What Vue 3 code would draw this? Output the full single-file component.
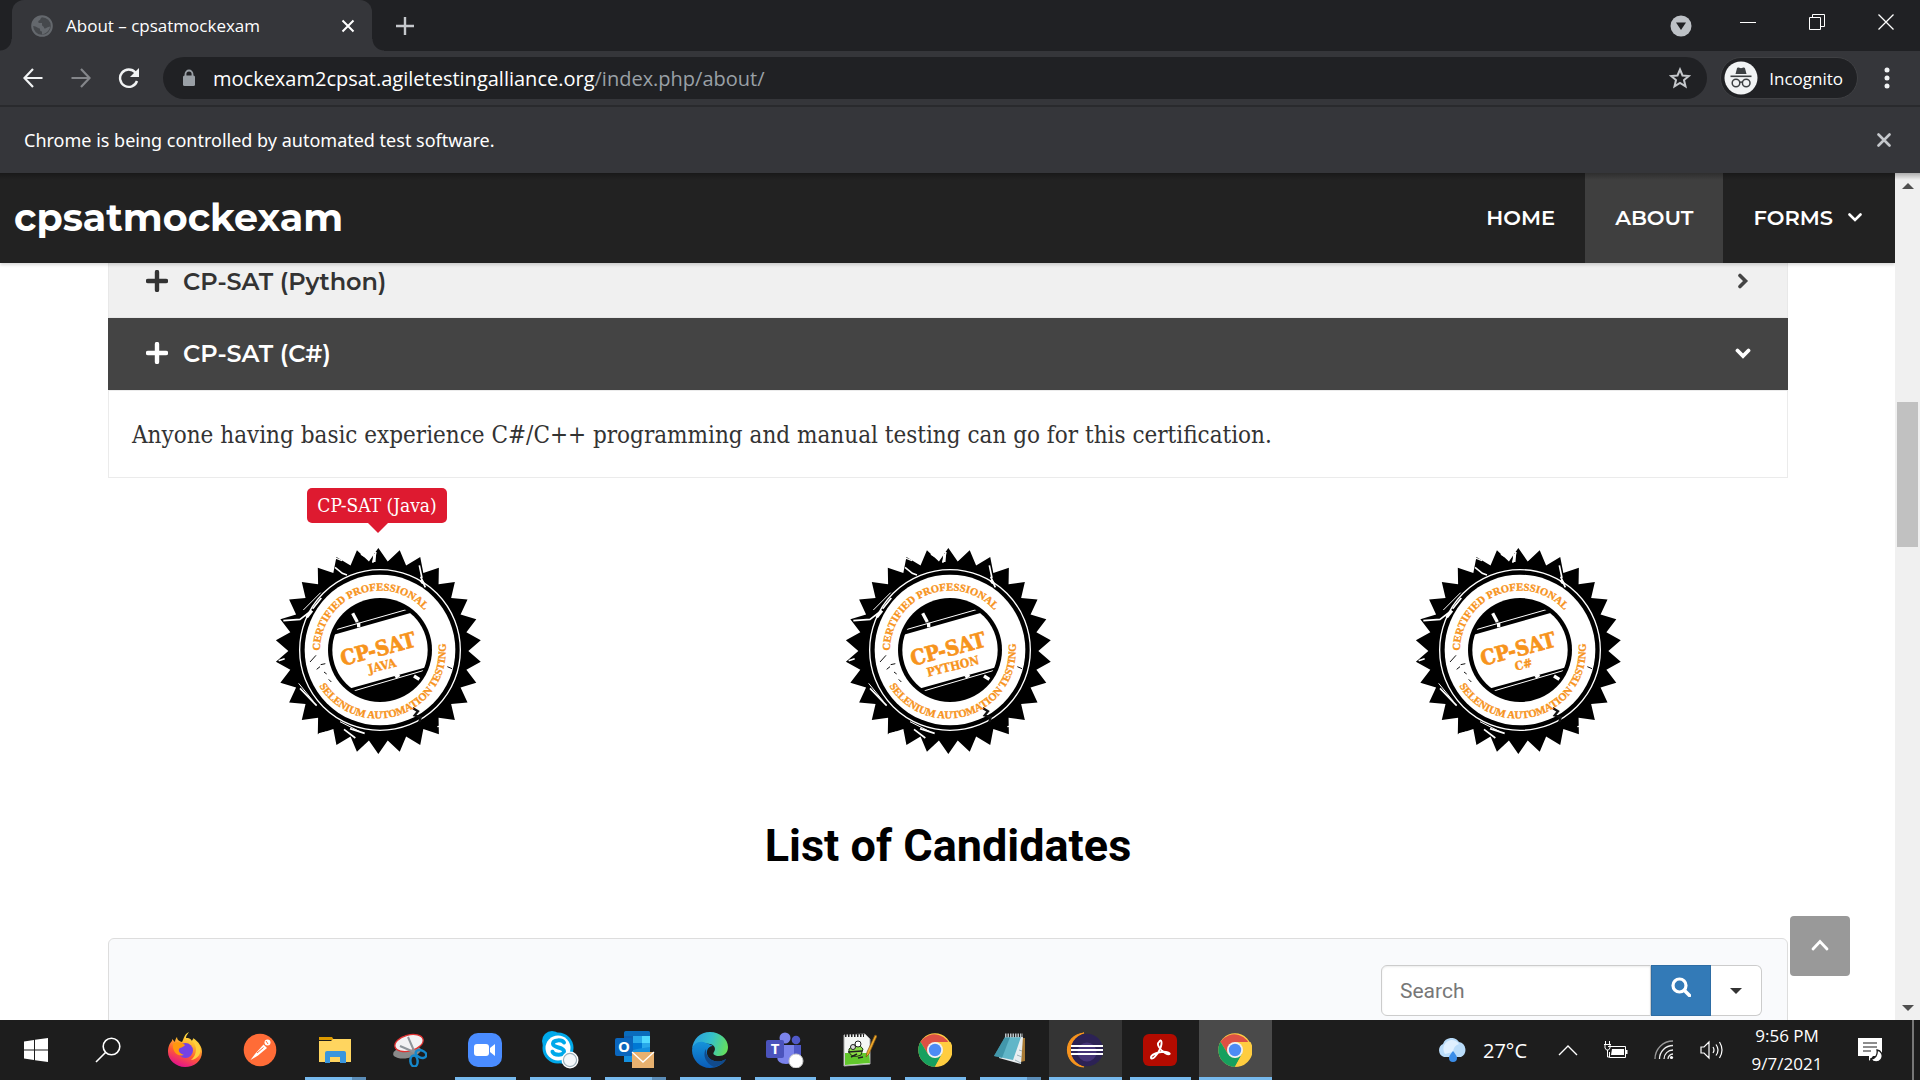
<script setup>
import { ref } from 'vue'

const query = ref('')

const badges = [
  { name: 'JAVA', tip: 'CP-SAT (Java)', x: 328, y: 430 },
  { name: 'PYTHON', x: 294, y: 440 },
  { name: 'C#', x: 348, y: 422 }
]

const round = (n) => Math.round(n * 10) / 10
const burst = Array.from({ length: 60 }, (_, i) => {
  const r = i % 2 ? 270 : 309
  const a = (i * 6 * Math.PI) / 180
  return `${round(355 + r * Math.sin(a))},${round(363 - r * Math.cos(a))}`
}).join(' ')

const apps = [
  { id: 'firefox', label: 'Firefox' },
  { id: 'postman', label: 'Postman' },
  { id: 'explorer', label: 'File Explorer', running: true, stacked: true },
  { id: 'snip', label: 'Snipping Tool' },
  { id: 'zoom', label: 'Zoom', running: true },
  { id: 'skype', label: 'Skype', running: true },
  { id: 'outlook', label: 'Outlook', running: true, stacked: true },
  { id: 'edge', label: 'Edge', running: true },
  { id: 'teams', label: 'Teams', running: true },
  { id: 'npp', label: 'Notepad++', running: true },
  { id: 'chrome', label: 'Chrome', running: true },
  { id: 'notepad', label: 'Notepad', running: true, stacked: true },
  { id: 'eclipse', label: 'Eclipse', running: true, lit: true },
  { id: 'acrobat', label: 'Acrobat', running: true },
  { id: 'chrome', label: 'Chrome test window', running: true, active: true }
]
</script>

<template>
  <div class="desktop">
    <div class="tabstrip">
      <div class="tab">
        <svg class="favicon" viewBox="0 0 22 22" width="22" height="22">
          <circle cx="11" cy="11" r="9.800" fill="#45484c" stroke="#64686d" stroke-width="2" />
          <path d="M11 2c-2 1-1 3-3 3.500c-1 .5-1 2 0 2.500h3v2c0 1.500 2 1 2 2.500s2 1 3 0l3-1c0 3-3 7-8 8v-3c-2 0-2-1-2-3c-2 0-3-2-7-2.500C1 6 6 1 11 2Z" fill="#64686d" />
        </svg>
        <span class="tab-title">About – cpsatmockexam</span>
        <button class="plain tab-close" aria-label="Close tab">
          <svg viewBox="0 0 14 14" width="14" height="14"><path d="M1.500 1.500 12.500 12.500M12.500 1.500 1.500 12.500" stroke="#fff" stroke-width="2" fill="none" /></svg>
        </button>
      </div>
      <button class="plain new-tab" aria-label="New tab">
        <svg viewBox="0 0 18 18" width="18" height="18"><path d="M9 0v18M0 9h18" stroke="#c5c8cc" stroke-width="2.400" /></svg>
      </button>
      <div class="window-controls">
        <button class="plain search-tabs" aria-label="Search tabs">
          <svg viewBox="0 0 22 22" width="22" height="22"><circle cx="11" cy="11" r="10.500" fill="#bdc1c6" /><path d="M6 7.500h10l-5 7.500z" fill="#202124" /></svg>
        </button>
        <button class="plain" aria-label="Minimize"><svg viewBox="0 0 16 16" width="16" height="16"><path d="M0 8.500h16" stroke="#fff" /></svg></button>
        <button class="plain" aria-label="Restore"><svg viewBox="0 0 16 16" width="16" height="16"><path d="M.5 3.500h11v12H.5zM3.500 3.500v-3h12v12h-4" fill="none" stroke="#fff" /></svg></button>
        <button class="plain" aria-label="Close window"><svg viewBox="0 0 16 16" width="16" height="16"><path d="M.5.500l15 15M15.500.500l-15 15" stroke="#fff" stroke-width="1.300" /></svg></button>
      </div>
    </div>

    <div class="toolbar">
      <button class="plain nav-btn" aria-label="Back"><svg viewBox="0 0 20 20" width="20" height="20"><path d="M19.500 10H2M10 1 1.500 10l8.500 9" fill="none" stroke="#f1f3f4" stroke-width="2.200" /></svg></button>
      <button class="plain nav-btn" aria-label="Forward"><svg viewBox="0 0 20 20" width="20" height="20"><path d="M.5 10H18M10 1l8.500 9-8.500 9" fill="none" stroke="#84868a" stroke-width="2.200" /></svg></button>
      <button class="plain nav-btn" aria-label="Reload"><svg viewBox="0 0 22 22" width="22" height="22"><path d="M19 14a8.700 8.700 0 1 1-1.600-8.500" fill="none" stroke="#f1f3f4" stroke-width="2.400" /><path d="M21 1v9h-9z" fill="#f1f3f4" /></svg></button>
      <div class="omnibox">
        <svg viewBox="0 0 14 18" width="14" height="18"><path d="M3.500 7V5a3.500 3.500 0 0 1 7 0v2" fill="none" stroke="#9aa0a6" stroke-width="1.800" /><rect x="1" y="6.500" width="12" height="10.500" rx="1.500" fill="#9aa0a6" /></svg>
        <span class="url">mockexam2cpsat.agiletestingalliance.org<span class="path">/index.php/about/</span></span>
        <button class="plain star" aria-label="Bookmark this page"><svg viewBox="0 0 22 22" width="22" height="22"><path d="m11 2.500 2.500 6 6.300.5-4.800 4.100 1.500 6.300-5.500-3.400-5.500 3.400L7 13.100 2.200 9l6.300-.5z" fill="none" stroke="#c5c8cc" stroke-width="2" /></svg></button>
      </div>
      <div class="incognito">
        <svg viewBox="0 0 34 34" width="34" height="34">
          <circle cx="17" cy="17" r="16.500" fill="#f1f3f4" />
          <path d="M11.500 13 13 7.300c.3-1 1-1 1.500-.8l2.500.8 2.500-.8c.6-.2 1.200-.1 1.500.8l1.500 5.700z" fill="#3c4043" />
          <path d="M6.500 15.300h21" stroke="#3c4043" stroke-width="1.600" />
          <g fill="none" stroke="#3c4043" stroke-width="1.500"><circle cx="12" cy="22" r="3.800" /><circle cx="22.200" cy="22" r="3.800" /><path d="M15.800 21.500q1.300-1 2.600 0" /></g>
        </svg>
        <span>Incognito</span>
      </div>
      <button class="plain menu" aria-label="Menu"><svg viewBox="0 0 6 22" width="6" height="22" fill="#f1f3f4"><circle cx="3" cy="3" r="2.500" /><circle cx="3" cy="11" r="2.500" /><circle cx="3" cy="19" r="2.500" /></svg></button>
    </div>

    <div class="infobar">
      <span>Chrome is being controlled by automated test software.</span>
      <button class="plain" aria-label="Dismiss"><svg viewBox="0 0 14 14" width="14" height="14"><path d="M1.500 1.500l11 11M12.500 1.500l-11 11" stroke="#c5c8cc" stroke-width="2.600" stroke-linecap="round" /></svg></button>
    </div>

    <div class="viewport">
      <div class="page">
        <header class="site-header">
          <a class="brand" href="#">cpsatmockexam</a>
          <nav>
            <a href="#home">HOME</a>
            <a href="#about" class="current">ABOUT</a>
            <a href="#forms">FORMS<svg viewBox="0 0 14 9" width="14" height="9"><path d="m1.500 1.500 5.500 5.500 5.500-5.500" fill="none" stroke="#fff" stroke-width="2.600" stroke-linecap="round" /></svg></a>
          </nav>
        </header>

        <main>
          <section class="accordion">
            <button class="fold">
              <svg viewBox="0 0 22 22" width="22" height="22"><path d="M11 2v18M2 11h18" stroke="currentColor" stroke-width="4.400" stroke-linecap="round" /></svg>
              <span>CP-SAT (Python)</span>
              <svg class="arrow" viewBox="0 0 16 16" width="16" height="16"><path d="m5 2.500 5.500 5.500L5 13.500" fill="none" stroke="#444" stroke-width="3.600" stroke-linecap="round" /></svg>
            </button>
            <button class="fold expanded">
              <svg viewBox="0 0 22 22" width="22" height="22"><path d="M11 2v18M2 11h18" stroke="currentColor" stroke-width="4.400" stroke-linecap="round" /></svg>
              <span>CP-SAT (C#)</span>
              <svg class="arrow" viewBox="0 0 16 16" width="16" height="16"><path d="m2.500 5.500 5.500 5.500 5.500-5.500" fill="none" stroke="#fff" stroke-width="3.800" stroke-linecap="round" /></svg>
            </button>
            <p class="answer">Anyone having basic experience C#/C++ programming and manual testing can go for this certification.</p>
          </section>

          <section class="badges">
            <div v-for="b in badges" :key="b.name" class="badge">
              <span v-if="b.tip" class="tip">{{ b.tip }}</span>
              <svg viewBox="-6 0 720 720" width="240" height="240">
                <polygon :points="burst" />
                <circle cx="360" cy="360" r="241" fill="none" stroke="#fff" stroke-width="4" />
                <circle cx="360" cy="360" r="226" fill="#fff" />
                <circle cx="360" cy="360" r="156" />
                <clipPath :id="'hub-' + b.name"><circle cx="360" cy="360" r="143" /></clipPath>
                <g :clip-path="`url(#hub-${b.name})`">
                  <path d="M180 326 470 244 540 400 240 484z" fill="#fff" />
                  <path d="M200 307 460 233M250 492 520 413" stroke="#fff" stroke-width="3" />
                </g>
                <g fill="none" stroke="#fff">
                  <path d="m225 112 22 18 14 5M348 66l-10 32M478 106l8 38M482 140l14 32M70 272l50-4 34-26M158 236l26-32M120 475l50 52M252 598l34 26M270 596l44 14M303 72l12 8M56 392l18-6M372 652l16 2" stroke-width="5" />
                  <path d="M344 72l-2 24M482 150l8 10M140 262l16-20" stroke-width="9" />
                  <path d="M278 250l14 26M296 278v14M462 438l16 10M418 434l-12 8" stroke-width="10" />
                  <path d="M130 240l52-52M116 460l44 54M240 575l60 30" stroke-width="3" />
                  <path d="M532 590l30-4M176 612l24-6M226 84l20 8" stroke-width="4" />
                </g>
                <g fill="none" stroke="#111">
                  <path d="m150 396 18-20M170 418l10-8M182 404l14-3M192 426l8 6M206 448l8 8M562 410l14 6" stroke-width="3" />
                  <path d="m458 534 16 10-10 12 18 6-4 14" stroke-width="7" />
                </g>
                <path :id="'top-' + b.name" d="M180 362A180 180 0 0 1 522 283" fill="none" />
                <path :id="'low-' + b.name" d="M178 468A205 205 0 0 0 555 328" fill="none" />
                <g class="stamp">
                  <text class="ring"><textPath :href="'#top-' + b.name">CERTIFIED PROFESSIONAL</textPath></text>
                  <text class="ring"><textPath :href="'#low-' + b.name">SELENIUM AUTOMATION TESTING</textPath></text>
                  <text class="title" x="248" y="408" transform="rotate(-15 248 408)">CP-SAT</text>
                  <text class="lang" :x="b.x" :y="b.y" :transform="`rotate(-14 ${b.x} ${b.y})`">{{ b.name }}</text>
                </g>
              </svg>
            </div>
          </section>

          <h2>List of Candidates</h2>

          <section class="panel">
            <form class="search" @submit.prevent>
              <input v-model="query" type="text" placeholder="Search" aria-label="Search candidates" />
              <button class="go" aria-label="Run search"><svg viewBox="0 0 20 20" width="20" height="20"><circle cx="8.500" cy="8.500" r="6.500" fill="none" stroke="#fff" stroke-width="3.200" /><path d="m13.500 13.500 5 5" stroke="#fff" stroke-width="3.600" stroke-linecap="round" /></svg></button>
              <button class="more" type="button" aria-label="Search options"><svg viewBox="0 0 12 6" width="12" height="6"><path d="M0 0h12L6 6z" fill="#333" /></svg></button>
            </form>
          </section>
        </main>

        <button class="to-top" aria-label="Back to top"><svg viewBox="0 0 18 12" width="18" height="12"><path d="m2 10 7-7.500 7 7.500" fill="none" stroke="#fff" stroke-width="2.800" stroke-linecap="round" /></svg></button>
      </div>
      <div class="scrollbar">
        <svg viewBox="0 0 12 6" width="12" height="6"><path d="M0 6 6 0l6 6z" fill="#505050" /></svg>
        <div class="track"><div class="thumb"></div></div>
        <svg viewBox="0 0 12 6" width="12" height="6"><path d="M0 0h12L6 6z" fill="#505050" /></svg>
      </div>
    </div>

    <footer class="taskbar">
      <button class="plain start" aria-label="Start"><svg viewBox="0 0 24 24" width="24" height="24" fill="#fff"><path d="M0 3.400 10 2v9.400H0zM11 1.800 24 0v11.400H11zM0 12.500h10V22L0 20.600zM11 12.500h13V24l-13-1.800z" /></svg></button>
      <button class="plain start" aria-label="Search Windows"><svg viewBox="0 0 26 26" width="26" height="26" fill="none" stroke="#fff" stroke-width="1.600"><circle cx="16.500" cy="9.500" r="8.300" /><path d="M10.500 15.500 1 25" /></svg></button>
      <div class="apps">
        <button v-for="(a, i) in apps" :key="i" class="plain app" :class="{ lit: a.lit, active: a.active, running: a.running, stacked: a.stacked }" :aria-label="a.label">
          <svg v-if="a.id === 'firefox'" viewBox="0 0 36 36" width="36" height="36">
            <defs><linearGradient id="ff" x1=".8" y1="0" x2=".4" y2="1"><stop offset="0" stop-color="#fff44f" /><stop offset=".35" stop-color="#ffb82e" /><stop offset=".65" stop-color="#ff5a36" /><stop offset="1" stop-color="#e3138b" /></linearGradient></defs>
            <path d="M22 0c-1 2-3 3-3 6 5 0 5 2 6 3 2-1 1-3 1-3 6 4 9 9 9 14 0 9-8 15-17 15S1 28 1 20c0-6 2-9 4-11V7l3 3c0-2 1-4 2-5 0 3 2 4 5 5 2-3 2-8 7-10z" fill="url(#ff)" />
            <circle cx="18.500" cy="18.500" r="7.500" fill="#7542e5" />
            <path d="M6 12c4-3 9-2 12 1-2 3-5 2-6 4-1 3 2 5 5 6-7 2-12-4-11-11z" fill="#ff980e" />
            <path d="M25 9c6 5 5 14-1 19 7-1 11-7 9-13-1-3-4-6-7-8z" fill="#ffd03b" />
          </svg>
          <svg v-else-if="a.id === 'postman'" viewBox="0 0 34 34" width="34" height="34">
            <circle cx="17" cy="17" r="16.300" fill="#ff6c37" /><circle cx="24.500" cy="9.500" r="3" fill="#fff" />
            <path d="m20.500 11.500 3.500 3.500-9 7.500L7.500 27l4.500-6z" fill="#fff" /><path d="m14 20 6.500-5.500M23 8l2 3" stroke="#ff6c37" stroke-width="1" />
          </svg>
          <svg v-else-if="a.id === 'explorer'" viewBox="0 0 34 28" width="34" height="28">
            <path d="M1 1h13l2 3H1z" fill="#dd9a00" /><path d="M1 5h12l2-2h18v23H1z" fill="#ffd55f" />
            <path d="M7 27V17q0-2 2-2h17q2 0 2 2v10h-6v-6H12v6z" fill="#3a96dd" />
          </svg>
          <svg v-else-if="a.id === 'snip'" viewBox="0 0 34 34" width="34" height="34">
            <ellipse cx="14" cy="19" rx="14" ry="6" fill="#8a8a8a" transform="rotate(-10 14 19)" />
            <ellipse cx="16" cy="10" rx="14.500" ry="8" fill="#f2f2f4" stroke="#e03131" stroke-width="1.300" transform="rotate(-15 16 10)" />
            <path d="m15 4 7 16M7 13l14 6" stroke="#8e949a" stroke-width="2" />
            <g fill="none" stroke="#1588cc" stroke-width="2.500"><ellipse cx="28" cy="21" rx="5.500" ry="3.600" transform="rotate(20 28 21)" /><ellipse cx="21" cy="28" rx="3.600" ry="5.500" transform="rotate(-5 21 28)" /></g>
          </svg>
          <svg v-else-if="a.id === 'zoom'" viewBox="0 0 34 34" width="34" height="34">
            <rect width="34" height="34" rx="10" fill="#4a8cff" /><rect x="6" y="11" width="15" height="12" rx="3" fill="#fff" /><path d="m22 15 5-4v12l-5-4z" fill="#fff" />
          </svg>
          <svg v-else-if="a.id === 'skype'" viewBox="0 0 38 38" width="38" height="38">
            <circle cx="11" cy="10" r="10" fill="#00a9ea" /><circle cx="23" cy="24" r="9" fill="#00a9ea" /><circle cx="17" cy="17" r="15.500" fill="#00a9ea" /><circle cx="17" cy="17" r="12.500" fill="#fff" />
            <path d="M23 11.500c-2-3-11-3-11 1.200 0 4.500 11 3 11 7.600 0 4.600-10 4.300-11.500.4" fill="none" stroke="#00a9ea" stroke-width="4" stroke-linecap="round" />
            <circle cx="29" cy="29" r="8.500" fill="#fff" /><circle cx="29" cy="29" r="6.600" fill="#f5f8fa" stroke="#9fb2bb" stroke-width="1.200" />
          </svg>
          <svg v-else-if="a.id === 'outlook'" viewBox="0 0 40 38" width="40" height="38">
            <path d="M11 0h22q2 0 2 2v29H9V2z" fill="#0f5fb0" /><path d="M11 0h22q2 0 2 2v3H9V2q0-2 2-2z" fill="#0a6cbd" /><path d="M18 5h9v7h-9z" fill="#28a8ea" /><path d="M27 5h8v7h-8z" fill="#50d9ff" /><path d="M18 12h9v6h-9z" fill="#0078d4" /><path d="M27 12h8v7h-8z" fill="#28a8ea" />
            <path d="m9 20 26-4v15H9z" fill="#1490df" /><rect x="0" y="7" width="18" height="18" rx="2" fill="#0a66be" />
            <text x="9" y="21" text-anchor="middle" class="glyph">O</text>
            <path d="M17 21h22v16H17z" fill="#e8b16f" /><path d="m17 21 11 10 11-10" fill="none" stroke="#fff" stroke-width="1.300" />
          </svg>
          <svg v-else-if="a.id === 'edge'" viewBox="0 0 36 36" width="36" height="36">
            <defs>
              <linearGradient id="ed" x1="0" y1=".4" x2="1" y2=".6"><stop offset="0" stop-color="#2a9fe0" /><stop offset=".5" stop-color="#35c1c9" /><stop offset="1" stop-color="#66e05a" /></linearGradient>
              <linearGradient id="ed2" x1="0" y1="0" x2="0" y2="1"><stop offset="0" stop-color="#1593da" /><stop offset="1" stop-color="#0a5cb8" /></linearGradient>
            </defs>
            <path d="M0 17C1 7 8 0 18 0c10 0 18 7 18 15 0 6-4 9-9 9-4 0-7-2-5-4 2-3 1-7-4-8-9-2-16 0-18 5z" fill="url(#ed)" />
            <path d="M0 18c1-7 8-10 14-7 4 1 7 3 7 3-6 0-8 7-4 12 4 4 10 5 17 1-3 6-10 9-16 9C8 36 0 28 0 18z" fill="url(#ed2)" />
            <path d="M14 17c-4 6 0 15 8 18 6-1 11-5 12-8-7 4-13 3-17-1-3-3-3-6-3-9z" fill="#114a8b" />
          </svg>
          <svg v-else-if="a.id === 'teams'" viewBox="0 0 38 36" width="38" height="36">
            <circle cx="30" cy="8" r="4.300" fill="#5059c9" /><path d="M25 13h10v10q0 6-6 6h-4z" fill="#5059c9" />
            <circle cx="19" cy="6" r="5.500" fill="#7b83eb" /><path d="M11 13h17v11q0 8-8 8-9 0-9-8z" fill="#7b83eb" />
            <rect x="0" y="8" width="18" height="18" rx="2" fill="#4b53bc" /><text x="9" y="22" text-anchor="middle" class="glyph">T</text>
            <circle cx="30" cy="29" r="7" fill="#fff" stroke="#c8c8c8" />
          </svg>
          <svg v-else-if="a.id === 'npp'" viewBox="0 0 34 34" width="34" height="34">
            <path d="m1 2 21-1 5 5v25L1 33z" fill="#f4f6f4" stroke="#aaa" /><path d="M2 20h24l1 10-25 2z" fill="#62c82c" />
            <path d="M2 2.500h19" stroke="#222" stroke-width="3" stroke-dasharray="1.500 1.500" />
            <path d="M6 16q8-9 14 0l-2 6q-9 4-12-3z" fill="#8bdc45" stroke="#213b12" /><circle cx="15" cy="11" r="3" fill="#fff" stroke="#222" /><circle cx="10" cy="14" r="2.500" fill="#ddd" stroke="#222" />
            <path d="m5 19 14-1M8 24l6-3M15 25l5-1" stroke="#222" stroke-width="1.500" /><path d="m23 24 1-5 8-17 2 1-8 18z" fill="#f0a92b" stroke="#7d5316" stroke-width=".7" />
          </svg>
          <svg v-else-if="a.id === 'chrome'" viewBox="0 0 34 34" width="34" height="34">
            <circle cx="17" cy="17" r="16.700" fill="#fc4" /><path d="M17 17H33A16.700 16.700 0 0 0 2.500 8.700L10 21z" fill="#dd5144" />
            <path d="M2.500 8.700A16.700 16.700 0 0 0 17 33.700L24 21l-7 4-7-4z" fill="#17a05e" /><path d="M17 9h15.500A16.700 16.700 0 0 1 17 33.700L24 21z" fill="#ffcd40" />
            <circle cx="17" cy="17" r="8" fill="#f1f1f1" /><circle cx="17" cy="17" r="6.200" fill="#4c8bf5" />
          </svg>
          <svg v-else-if="a.id === 'notepad'" viewBox="0 0 34 34" width="34" height="34">
            <path d="m27 5 5 0v23l-5 1z" fill="#a77a35" /><path d="M13 4h17l-2 27-22-6z" fill="#e9eef0" /><path d="M12 4h16l-8 23-19-4z" fill="#61b6c8" /><path d="M12 4h5L9 25l-8-2z" fill="#2d8297" opacity=".6" />
            <path d="M12 2.500h18" stroke="#bcc4c8" stroke-width="4" stroke-dasharray="1.500 1" /><path d="m22 27 6 3M24 22l5 2M26 17l3 1" stroke="#9db0b7" />
          </svg>
          <svg v-else-if="a.id === 'eclipse'" viewBox="0 0 38 36" width="38" height="36">
            <path d="M18 1C-4 3-4 33 18 35C0 30 1 6 18 1z" fill="#f7941e" stroke="#f7941e" stroke-width="1.200" /><circle cx="21" cy="18" r="16.200" fill="#2c2255" /><circle cx="21" cy="20" r="9.500" fill="#443377" />
            <path d="M5 14h32M5 18h32M5 22h32" stroke="#fff" stroke-width="2" />
          </svg>
          <svg v-else viewBox="0 0 34 32" width="34" height="32">
            <rect width="34" height="32" rx="6" fill="#b30b00" /><path d="M16 8c2-4 4 0 1 7-3 7-8 11-9 9-1-3 8-7 15-6 6 1 4 4-1 1-5-3-9-9-6-11z" fill="none" stroke="#fff" stroke-width="1.900" />
          </svg>
        </button>
      </div>
      <div class="tray">
        <div class="weather">
          <svg viewBox="0 0 32 24" width="32" height="24"><path d="M7 19a7 7 0 0 1-1-13A9 9 0 0 1 22 4a8 8 0 0 1 2 15z" fill="#b9dcfa" /><path d="M8 16A9 9 0 0 1 14 2a9 9 0 0 1 8 4 9 9 0 0 0-6 8z" fill="#dff0ff" /><path d="M16 13c3 4 4 5 4 7a4 4 0 0 1-8 0c0-2 1-3 4-7z" fill="#3b8de8" /></svg>
          <span>27°C</span>
        </div>
        <button class="plain cell" aria-label="Show hidden icons"><svg viewBox="0 0 20 12" width="20" height="12"><path d="m1 11 9-9 9 9" fill="none" stroke="#fff" stroke-width="1.400" /></svg></button>
        <button class="plain cell" aria-label="Battery"><svg viewBox="0 0 24 18" width="24" height="18"><path d="M4 5.500h17.500v11H5.500V11" fill="none" stroke="#fff" /><path d="M8 8h12v6H7z" fill="#fff" /><path d="M22.500 9v4" stroke="#fff" stroke-width="2" /><path d="M1.500 0v3M5.500 0v3M0 3.500h7M1 4v3l1.500 2h2L6 7V4M3.500 9v7h2" fill="none" stroke="#fff" /></svg></button>
        <button class="plain cell" aria-label="Wi-Fi"><svg viewBox="0 0 20 20" width="20" height="20" fill="none"><path d="M1 19A18 18 0 0 1 19 1" stroke="#999" stroke-width="1.300" /><path d="M5.500 19A13.500 13.500 0 0 1 19 5.500M10 19a9 9 0 0 1 9-9M14 19a5 5 0 0 1 5-5" stroke="#eee" stroke-width="1.300" /><circle cx="17.500" cy="17.500" r="1.600" fill="#fff" /></svg></button>
        <button class="plain cell" aria-label="Volume"><svg viewBox="0 0 24 20" width="24" height="20" fill="none" stroke="#fff" stroke-width="1.200"><path d="M1 7h3l5-5v16l-5-5H1zM13 7q2 3 0 6M16 4.500q4 5.500 0 11M19.500 2q5 8 0 16" /></svg></button>
        <div class="clock"><span>9:56 PM</span><span>9/7/2021</span></div>
        <button class="plain notify" aria-label="Notifications"><svg viewBox="0 0 24 24" width="24" height="24"><path d="M0 0h24v18h-9l-4 5v-5H0z" fill="#fff" /><path d="M5 5h14M5 9h14M5 13h8" stroke="#1d1d1d" stroke-width="1.200" /><path d="M19 12a6 6 0 1 1-6 9c4 0 7-4 6-9z" fill="#fff" stroke="#1d1d1d" stroke-width="1.300" /></svg></button>
        <span class="peek"></span>
      </div>
    </footer>
  </div>
</template>

<style>
body { margin: 0; background: #fff; }
</style>

<style scoped>
* { box-sizing: border-box; }
.desktop { display: flex; flex-direction: column; height: 100vh; min-height: 640px; overflow: hidden; font-family: "Segoe UI", "Open Sans", sans-serif; font-size: 18px; color: #fff; }
svg { display: block; flex: none; }
button { font: inherit; cursor: pointer; }
.plain { display: flex; align-items: center; justify-content: center; padding: 0; border: 0; background: none; color: inherit; }
a { text-decoration: none; color: inherit; }

.tabstrip { display: flex; flex: none; height: 51px; padding-left: 12px; background: #202124; }
.tab { position: relative; display: flex; align-items: center; width: 360px; padding: 0 17px 0 19px; background: #35363a; border-radius: 12px 12px 0 0; }
.tab::before, .tab::after { content: ""; position: absolute; bottom: 0; width: 12px; height: 12px; }
.tab::before { left: -12px; background: radial-gradient(circle at 0 0, #202124 11px, #35363a 12px); }
.tab::after { right: -12px; background: radial-gradient(circle at 100% 0, #202124 11px, #35363a 12px); }
.tab-title { margin-left: 13px; font-size: 17px; white-space: nowrap; }
.tab-close { margin-left: auto; }
.new-tab { margin-left: 24px; }
.window-controls { display: flex; margin-left: auto; }
.window-controls button { width: 69px; height: 44px; }
.window-controls .search-tabs { width: 65px; height: 51px; }

.toolbar { display: flex; flex: none; align-items: center; height: 56px; padding: 0 12px 0 9px; border-bottom: 2px solid #292a2d; background: #35363a; }
.nav-btn { width: 48px; height: 42px; }
.omnibox { display: flex; flex: 1; align-items: center; height: 42px; margin-left: 10px; padding: 0 16px 0 19px; border-radius: 21px; background: #202124; }
.url { margin-left: 17px; font-size: 20px; }
.path { color: #9aa0a6; }
.star { margin-left: auto; }
.incognito { display: flex; align-items: center; gap: 11px; height: 42px; margin-left: 13px; padding: 0 14px 0 3px; border: 1px solid #3f4043; border-radius: 21px; background: #202124; font-size: 17px; }
.menu { width: 42px; margin-left: 8px; }

.infobar { display: flex; flex: none; align-items: center; justify-content: space-between; height: 66px; padding: 0 29px 0 24px; background: #35363a; font-family: "Segoe UI", "Noto Sans", sans-serif; }

.viewport { display: flex; flex: 1; min-height: 0; position: relative; background: #fff; }
.viewport::before { content: ""; position: absolute; z-index: 3; top: 0; left: 0; right: 0; height: 7px; background: linear-gradient(rgba(0, 0, 0, .28), transparent); }
.page { position: relative; flex: 1; min-width: 0; overflow: hidden; }
.site-header { position: relative; z-index: 2; display: flex; align-items: stretch; justify-content: space-between; height: 90px; padding: 0 3px 0 14px; background: #222; box-shadow: 0 2px 3px rgba(0, 0, 0, .15); font-family: "Montserrat", "Inter", sans-serif; }
.brand { display: flex; align-items: center; padding-bottom: 2px; font-size: 38px; font-weight: 700; }
nav { display: flex; font-size: 21px; font-weight: 600; }
nav a { display: flex; align-items: center; gap: 15px; padding: 0 30px 2px; }
.current { background: #3f3f3f; }

main { margin: 0 107px 0 108px; }
.accordion { margin-top: -17px; }
.fold { display: flex; align-items: center; width: 100%; height: 72px; padding: 0 36px 2px 37px; border: 1px solid #e8e8e8; background: #f0f0f0; color: #333; font-family: "Montserrat", "Inter", sans-serif; font-size: 24px; font-weight: 600; }
.fold span { margin-left: 15px; }
.fold.expanded { border-color: #444; background: #444; color: #fff; }
.arrow { margin-left: auto; }
.answer { height: 88px; margin: 0; padding: 0 23px; border: 1px solid #ebebeb; color: #333; font-family: "Roboto Slab", "DejaVu Serif Condensed", "DejaVu Serif", serif; font-size: 24px; line-height: 88px; white-space: nowrap; }

.badges { display: grid; grid-template-columns: repeat(3, 1fr); gap: 30px; margin-top: 52px; }
.badge { position: relative; display: flex; justify-content: center; }
.tip { position: absolute; top: -42px; left: 50%; width: 140px; margin-left: -71px; border-radius: 5px; background: #de1a30; font-family: "Roboto Slab", "DejaVu Serif Condensed", "DejaVu Serif", serif; font-size: 19px; line-height: 35px; text-align: center; white-space: nowrap; }
.tip::after { content: ""; position: absolute; top: 35px; left: 61px; border: 10px solid transparent; border-top-color: #de1a30; border-bottom: 0; }
.stamp { fill: #f7941d; font-family: "DejaVu Serif Condensed", "DejaVu Serif", serif; font-weight: 700; }
.ring { font-family: "Liberation Serif", serif; font-size: 32px; stroke: #f7941d; stroke-width: 1px; }
.title { font-size: 63px; stroke: #f7941d; stroke-width: 2px; }
.lang { font-size: 36px; stroke: #f7941d; stroke-width: 1px; }

h2 { margin: 49px 0 0; color: #000; font-family: Roboto, sans-serif; font-size: 45px; font-weight: 700; line-height: 54px; text-align: center; }
.panel { display: flex; justify-content: flex-end; align-items: flex-start; height: 200px; margin-top: 65px; padding: 26px 25px; border: 1px solid #ddd; border-radius: 6px; background: #f9fafc; }
.search { display: flex; height: 51px; }
.search input { width: 270px; padding: 0 18px; border: 1px solid #ccc; border-radius: 6px 0 0 6px; background: #fff; box-shadow: inset 0 1px 2px rgba(0, 0, 0, .08); color: #555; font-family: Roboto, sans-serif; font-size: 21px; }
.search input::placeholder { color: #777; }
.search button { display: flex; justify-content: center; padding: 0; }
.search .go { width: 60px; padding-top: 11px; border: 1px solid #2e6da4; background: #337ab7; }
.search .more { align-items: center; width: 51px; border: 1px solid #ccc; border-left: 0; border-radius: 0 6px 6px 0; background: #fff; }
.to-top { position: absolute; z-index: 2; right: 45px; bottom: 44px; display: flex; align-items: center; justify-content: center; width: 60px; height: 60px; padding: 0 0 2px; border: 0; border-radius: 4px; background: #999; }

.scrollbar { display: flex; flex-direction: column; align-items: center; width: 25px; padding: 10px 0 9px; background: #f0f0f0; }
.track { flex: 1; width: 21px; }
.thumb { height: 145px; margin-top: 213px; background: #c1c1c1; }

.taskbar { display: flex; flex: none; height: 60px; background: #1d1d1d; }
.start { width: 72px; }
.apps { display: flex; gap: 2px; margin-left: 5px; }
.app { position: relative; width: 73px; padding-right: 1px; }
.running::after { content: ""; position: absolute; bottom: 0; left: 6px; right: 6px; height: 3px; background: #76b9ed; }
.stacked::after { background: linear-gradient(90deg, #76b9ed 47px, #5b8db8 47px); }
.lit { background: #343434; }
.active { background: #4a4a4a; }
.lit::after, .active::after { left: 0; right: 0; }
.glyph { fill: #fff; font-family: "Open Sans", sans-serif; font-size: 15px; font-weight: 700; }
.tray { display: flex; align-items: stretch; margin-left: auto; }
.weather { display: flex; align-items: center; gap: 14px; padding-right: 17px; font-size: 20px; }
.cell { width: 48px; }
.clock { display: flex; flex-direction: column; justify-content: center; width: 102px; font-size: 17px; line-height: 28px; text-align: center; }
.notify { width: 64px; }
.peek { width: 2px; margin: 0 6px 0 10px; background: #777; }
</style>
